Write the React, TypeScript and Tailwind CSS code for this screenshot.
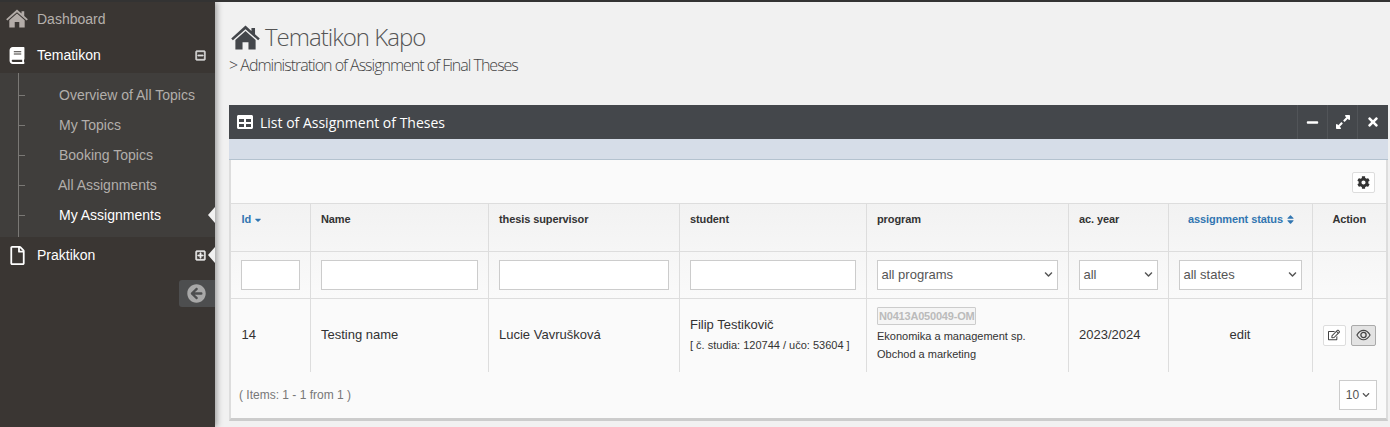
import { FaBook, FaRegFile, FaRegMinusSquare, FaRegPlusSquare, FaArrowCircleLeft, FaTable, FaMinus, FaExpandAlt, FaTimes, FaCog, FaSortDown, FaSort, FaRegEdit, FaChevronDown } from 'react-icons/fa';

const subItems = ['Overview of All Topics', 'My Topics', 'Booking Topics', 'All Assignments', 'My Assignments'];

function HomeIcon({ className }: { className: string }) {
	return (
		<svg className={className} viewBox="0 0 24 21" fill="currentColor">
			<path d="M12 0.5 L17 5 V2.5 H20 V7.7 L24 11.3 L22.6 12.8 L12 3.5 L1.4 12.8 L0 11.3 Z" />
			<path d="M12 5 L20.5 12.5 V20.5 H14.5 V14.5 H9.5 V20.5 H3.5 V12.5 Z" />
		</svg>
	);
}

function EyeIcon({ className }: { className: string }) {
	return (
		<svg className={className} viewBox="0 0 16 12" fill="none" stroke="currentColor">
			<path strokeWidth="1.2" d="M1 6 C3 2.5 5.5 1 8 1 S13 2.5 15 6 C13 9.5 10.5 11 8 11 S3 9.5 1 6 Z" />
			<circle cx="8" cy="6" r="2.8" strokeWidth="1.4" />
		</svg>
	);
}

function Notch({ className }: { className: string }) {
	return <span className={`absolute right-0 w-0 h-0 border-y-[8px] border-y-transparent border-r-[7px] border-r-[#f1f1f1] ${className}`} />;
}

function Sidebar() {
	return (
		<aside className="w-[215px] shrink-0 bg-[#3a3633] shadow-[2px_0_6px_rgba(0,0,0,0.35)] font-['Liberation_Sans',sans-serif] text-sm">
			<a className="flex items-center h-[35px] pb-[2px] text-[#b5b0ac]">
				<HomeIcon className="ml-[6px] w-[22px] h-[19px] text-[#b3aca8]" />
				<span className="ml-[9px]">Dashboard</span>
			</a>
			<a className="flex items-center h-[36px] text-white">
				<FaBook className="ml-[9px] w-[16px] h-[17px]" />
				<span className="ml-[12px]">Tematikon</span>
				<FaRegMinusSquare className="ml-auto mr-[9px] w-[11px] h-[11px] text-[#ddd]" stroke="currentColor" strokeWidth={30} />
			</a>
			<ul className="relative bg-[#403e3c] h-[164px] text-[#b2aeab] before:absolute before:left-[18px] before:top-0 before:bottom-0 before:w-px before:bg-[#7a7875]">
				{subItems.map((item, i) => (
					<li key={item} className={`relative flex items-center h-[30px] top-[7px] ${i === 4 ? 'text-white' : ''} ${i === 3 ? 'pl-[58px]' : 'pl-[59px]'}`}>
						<span className="absolute left-[18px] top-[15px] w-[7px] h-px bg-[#7a7875]" />
						{item}
						{i === 4 && <Notch className="top-[7px]" />}
					</li>
				))}
			</ul>
			<a className="relative flex items-center h-[36px] text-white">
				<FaRegFile className="ml-[10px] w-[15px] h-[19px]" />
				<span className="ml-[12px]">Praktikon</span>
				<FaRegPlusSquare className="ml-auto mr-[9px] w-[11px] h-[11px] text-[#eee]" stroke="currentColor" strokeWidth={30} />
				<Notch className="top-[10px]" />
			</a>
			<div className="flex justify-end mt-[7px]">
				<button className="flex items-center justify-start pl-[8px] w-[36px] h-[27px] bg-[#4d4e4f] rounded-l-[3px]">
					<FaArrowCircleLeft className="w-[19px] h-[19px] text-[#a8a8a8]" />
				</button>
			</div>
		</aside>
	);
}

function FilterInput() {
	return <input className="block w-full h-[30px] bg-white border border-[#ccc] outline-none" />;
}

function FilterSelect({ label }: { label: string }) {
	return (
		<div className="flex items-center justify-between w-full h-[30px] bg-white border border-[#ccc] pl-[4px] pr-[4px] text-[13px] text-[#555] [font-weight:500]">
			<span>{label}</span>
			<FaChevronDown className="w-[9px] h-[9px] text-[#555]" />
		</div>
	);
}

const th = 'h-[47px] align-top pt-[7px] px-[10.5px] text-[11px] font-bold text-[#333] tracking-[-0.1px] border-b border-r border-[#ddd] last:border-r-0';
const filter = 'h-[47px] align-middle px-[10px] border-b border-r border-[#ddd] last:border-r-0';
const td = 'h-[74px] align-middle px-[10.5px] pb-[2px] text-[13px] text-[#333] border-r border-[#ddd] last:border-r-0';

function AssignmentTable() {
	return (
		<table className="w-full table-fixed border-collapse">
			<colgroup>
				<col className="w-[79px]" />
				<col className="w-[178px]" />
				<col className="w-[191px]" />
				<col className="w-[187px]" />
				<col className="w-[202px]" />
				<col className="w-[100px]" />
				<col className="w-[144px]" />
				<col className="w-[74px]" />
			</colgroup>
			<thead className="bg-gradient-to-b from-[#f2f2f2] to-[#fafafa]">
				<tr>
					<th className={`${th} text-left`}>
						<span className="text-[#3276b1] inline-flex items-center gap-[2px]">Id <FaSortDown className="w-[10px] h-[10px] -mt-[3px]" /></span>
					</th>
					<th className={`${th} text-left`}>Name</th>
					<th className={`${th} text-left`}>thesis supervisor</th>
					<th className={`${th} text-left`}>student</th>
					<th className={`${th} text-left`}>program</th>
					<th className={`${th} text-left`}>ac. year</th>
					<th className={`${th} text-center`}>
						<span className="ml-[3px] text-[#3276b1] inline-flex items-center gap-[3px]">assignment status <FaSort className="w-[9px] h-[11px]" /></span>
					</th>
					<th className={`${th} text-center`}>Action</th>
				</tr>
				<tr>
					<td className={filter}><FilterInput /></td>
					<td className={filter}><FilterInput /></td>
					<td className={filter}><FilterInput /></td>
					<td className={filter}><FilterInput /></td>
					<td className={filter}><FilterSelect label="all programs" /></td>
					<td className={filter}><FilterSelect label="all" /></td>
					<td className={filter}><FilterSelect label="all states" /></td>
					<td className={filter} />
				</tr>
			</thead>
			<tbody>
				<tr>
					<td className={td}>14</td>
					<td className={td}>Testing name</td>
					<td className={td}>Lucie Vavrušková</td>
					<td className={td}>
						<div>Filip Testikovič</div>
						<div className="text-[11px] mt-[3px]">[ č. studia: 120744 / učo: 53604 ]</div>
					</td>
					<td className={td}>
						<span className="inline-block h-[18px] px-[1px] leading-[16px] border border-[#ccc] bg-[#f5f5f5] rounded-[1px] text-[11px] font-bold tracking-[-0.2px] text-[#bbb]">N0413A050049-OM</span>
						<div className="text-[11px] leading-[18px] mt-[1px]">Ekonomika a management sp.</div>
						<div className="text-[11px] leading-[18px]">Obchod a marketing</div>
					</td>
					<td className={td}>2023/2024</td>
					<td className={`${td} text-center`}>edit</td>
					<td className="h-[74px] align-middle">
						<div className="flex justify-center gap-[5px]">
							<button className="flex items-center justify-center w-[23px] h-[21px] bg-white border border-[#ddd] rounded-[2px]">
								<FaRegEdit className="w-[12px] h-[12px] text-[#444]" />
							</button>
							<button className="flex items-center justify-center w-[25px] h-[21px] bg-[#e3e3e3] border border-[#aaa] rounded-[2px]">
								<EyeIcon className="w-[15px] h-[12px] text-[#444]" />
							</button>
						</div>
					</td>
				</tr>
			</tbody>
		</table>
	);
}

export default function App() {
	return (
		<div className="flex h-[427px] overflow-hidden border-t-2 border-[#333] bg-[#f1f1f1] font-['Liberation_Sans',sans-serif]">
			<Sidebar />
			<main className="flex-1 min-w-0 pl-[14px] pr-[2px]">
				<h1 className="flex items-center gap-[5px] mt-[21px] h-[28px] text-[24px] font-light text-[#555] font-['Open_Sans',sans-serif] tracking-[-1px]">
					<HomeIcon className="w-[29px] h-[25px] ml-[2px] text-[#44474b]" />
					Tematikon Kapo
				</h1>
				<p className="mt-[3px] text-[16px] leading-[22px] font-light text-[#444] font-['Open_Sans',sans-serif] tracking-[-1px]">&gt; Administration of Assignment of Final Theses</p>
				<section className="mt-[29px]">
					<header className="flex items-center h-[34px] bg-[#44474b] text-white">
						<FaTable className="ml-[7px] w-[18px] h-[16px]" />
						<h2 className="ml-[6px] text-[14px] font-['Open_Sans',sans-serif]">List of Assignment of Theses</h2>
						<div className="ml-auto flex h-full mr-[1px]">
							<button className="flex items-center justify-center w-[30px] h-full border-l border-[#515458]"><FaMinus className="w-[13px] h-[13px]" /></button>
							<button className="flex items-center justify-center w-[30px] h-full border-l border-[#515458]"><FaExpandAlt className="w-[16px] h-[16px]" /></button>
							<button className="flex items-center justify-center w-[30px] h-full border-l border-[#515458]"><FaTimes className="w-[14px] h-[14px]" /></button>
						</div>
					</header>
					<div className="h-[21px] bg-[#d6dde8] border-b border-[#b4c2cf]" />
					<div className="bg-[#fafafa] border-x-2 border-[#ddd] border-b-[3px] border-b-[#ccc] h-[261px]">
						<div className="flex justify-end items-center h-[44px] pr-[11px] pt-[1px] border-b border-[#ddd]">
							<button className="flex items-center justify-center w-[23px] h-[21px] bg-white border border-[#ddd] rounded-[2px]">
								<FaCog className="w-[13px] h-[13px] text-[#333]" />
							</button>
						</div>
						<AssignmentTable />
						<div className="flex items-center justify-between pl-[8px] pr-[9px] h-[46px]">
							<span className="text-[12px] text-[#777]">( Items: 1 - 1 from 1 )</span>
							<div className="flex items-center justify-center gap-[3px] w-[38px] h-[30px] bg-white border border-[#ccc] text-[12px] text-[#555]">
								10 <FaChevronDown className="w-[8px] h-[8px]" />
							</div>
						</div>
					</div>
				</section>
			</main>
		</div>
	);
}
